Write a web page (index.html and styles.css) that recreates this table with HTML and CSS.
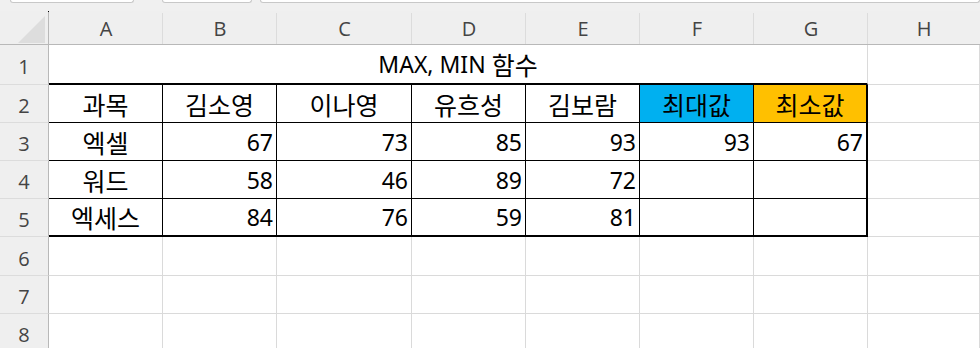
FILE: index.html
```html
<!DOCTYPE html>
<html lang="ko">
<head>
<meta charset="utf-8">
<title>MAX, MIN 함수</title>
<link rel="stylesheet" href="styles.css">
</head>
<body>
<div class="tabs">
  <div class="tab tab1"></div>
  <div class="tab tab2"></div>
  <div class="tab tab3"></div>
</div>
<div class="sheet">
  <div class="corner"><div class="tri"></div></div>
  <div class="ch">A</div><div class="ch">B</div><div class="ch">C</div><div class="ch">D</div><div class="ch">E</div><div class="ch">F</div><div class="ch">G</div><div class="ch last">H</div>

  <div class="rh">1</div>
  <div class="c title">MAX, MIN&nbsp;<span class="ko">함수</span></div>
  <div class="c"></div>

  <div class="rh">2</div>
  <div class="c t ctr ko">과목</div>
  <div class="c t ctr ko">김소영</div>
  <div class="c t ctr ko">이나영</div>
  <div class="c t ctr ko">유흐성</div>
  <div class="c t ctr ko">김보람</div>
  <div class="c t ctr ko blue">최대값</div>
  <div class="c t ctr ko orange r">최소값</div>
  <div class="c"></div>

  <div class="rh">3</div>
  <div class="c t ctr ko">엑셀</div>
  <div class="c t num">67</div>
  <div class="c t num">73</div>
  <div class="c t num">85</div>
  <div class="c t num">93</div>
  <div class="c t num">93</div>
  <div class="c t num r">67</div>
  <div class="c"></div>

  <div class="rh">4</div>
  <div class="c t ctr ko">워드</div>
  <div class="c t num">58</div>
  <div class="c t num">46</div>
  <div class="c t num">89</div>
  <div class="c t num">72</div>
  <div class="c t num"></div>
  <div class="c t num r"></div>
  <div class="c"></div>

  <div class="rh">5</div>
  <div class="c t ctr ko b">엑세스</div>
  <div class="c t num b">84</div>
  <div class="c t num b">76</div>
  <div class="c t num b">59</div>
  <div class="c t num b">81</div>
  <div class="c t num b"></div>
  <div class="c t num b r"></div>
  <div class="c"></div>

  <div class="rh">6</div>
  <div class="c"></div><div class="c"></div><div class="c"></div><div class="c"></div><div class="c"></div><div class="c"></div><div class="c"></div><div class="c"></div>
  <div class="rh">7</div>
  <div class="c"></div><div class="c"></div><div class="c"></div><div class="c"></div><div class="c"></div><div class="c"></div><div class="c"></div><div class="c"></div>
  <div class="rh">8</div>
  <div class="c"></div><div class="c"></div><div class="c"></div><div class="c"></div><div class="c"></div><div class="c"></div><div class="c"></div><div class="c"></div>
</div>
</body>
</html>
```

FILE: styles.css
```css
* { box-sizing: border-box; }
html, body {
  margin: 0;
  padding: 0;
  width: 980px;
  height: 348px;
  overflow: hidden;
  background: #f0f0f0;
}
.tabs {
  height: 11px;
  display: flex;
  align-items: flex-start;
  gap: 8px;
  padding-left: 10px;
}
.tab {
  height: 3px;
  background: #ffffff;
  border: 1px solid #c8c8c8;
  border-top: none;
  border-radius: 0 0 5px 5px;
}
.tab1 { width: 124px; }
.tab2 { width: 90px; margin-left: 20px; }
.tab3 { flex: 1; }

.sheet {
  display: grid;
  grid-template-columns: 49px 114px 114px 135px 114px 114px 114px 114px 1fr;
  grid-template-rows: 34px 40px 38px 38px 38px 38px 39px 38px 38px;
  background: #ffffff;
}
.corner {
  background: #efefef;
  border-right: 1px solid #b8b8b8;
  border-bottom: 1px solid #b8b8b8;
  position: relative;
}
.corner::before {
  content: "";
  position: absolute;
  right: -1px;
  top: 0;
  width: 1px;
  height: 1px;
  background: #000;
}
.tri {
  position: absolute;
  left: 18px;
  top: 5px;
  width: 27px;
  height: 27px;
  background: #dddddd;
  clip-path: polygon(100% 0, 100% 100%, 0 100%);
}
.ch {
  background: #efefef;
  border-bottom: 1px solid #b8b8b8;
  display: flex;
  align-items: center;
  justify-content: center;
  font-family: "Open Sans", "Noto Sans", sans-serif;
  font-size: 20px;
  color: #444444;
  padding-top: 2px;
  position: relative;
}
.ch::after {
  content: "";
  position: absolute;
  right: 0;
  top: 2px;
  bottom: 0;
  width: 1px;
  background: #dcdcdc;
}
.ch.last::after { display: none; }
.rh {
  background: #efefef;
  border-right: 1px solid #b8b8b8;
  border-bottom: 1px solid #dcdcdc;
  display: flex;
  align-items: center;
  justify-content: center;
  font-family: "Open Sans", "Noto Sans", sans-serif;
  font-size: 20px;
  color: #444444;
  padding-top: 4px;
}
.c {
  border-right: 1px solid #dadada;
  border-bottom: 1px solid #dadada;
  display: flex;
  align-items: center;
  font-family: "Noto Sans", "Noto Sans CJK KR", sans-serif;
  font-size: 23px;
  line-height: 1;
  color: #000000;
  background: #ffffff;
  padding-top: 1px;
}
.ko {
  font-family: "Noto Sans CJK KR", sans-serif;
  font-size: 25px;
  line-height: 1;
}
.title {
  grid-column: span 7;
  justify-content: center;
  border-bottom: 2px solid #000000;
}
.t {
  border-right-color: #000000;
  border-bottom-color: #000000;
}
.ctr { justify-content: center; }
.num { justify-content: flex-end; padding-right: 3px; }
.t.r { border-right-width: 2px; }
.t.b { border-bottom-width: 2px; }
.blue { background: #00b0f0; }
.orange { background: #ffc000; }
```
